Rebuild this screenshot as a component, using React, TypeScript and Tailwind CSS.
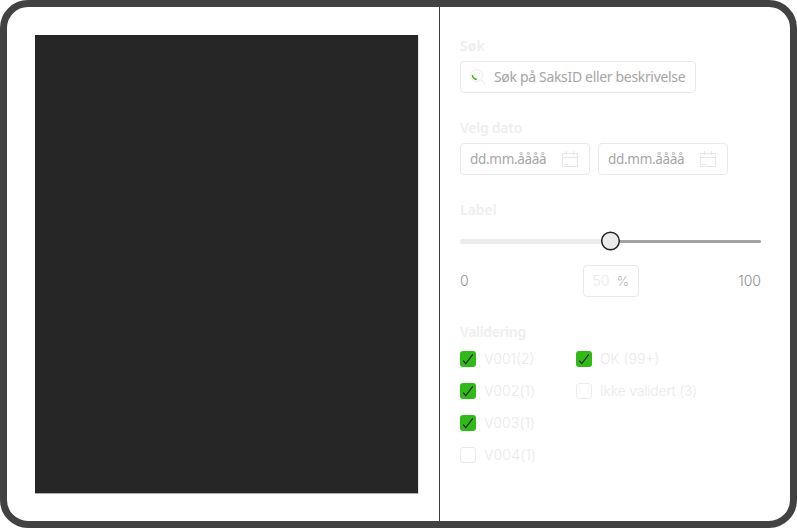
import React from "react";

function Check({ label, checked = false, className = "" }: { label: string; checked?: boolean; className?: string }) {
  return (
    <label className="flex h-8 items-center gap-2">
      <span
        className={`flex size-4 shrink-0 items-center justify-center rounded-[3px] ${
          checked ? "bg-[#31b917]" : "border border-[#ebebeb] bg-white"
        }`}
      >
        {checked && (
          <svg width="16" height="16" viewBox="0 0 16 16" fill="none" stroke="#222" strokeWidth="1.1">
            <path d="M3.2 9.7 5.8 12.6 12.8 3.4" />
          </svg>
        )}
      </span>
      <span className={`whitespace-nowrap font-['Inter',sans-serif] font-light text-[#e9e9e9] ${className}`}>{label}</span>
    </label>
  );
}

function DateField() {
  return (
    <div className="flex h-8 w-[130px] items-center justify-between rounded-[4px] border border-[#e9e9e9] pr-[11px] pl-[9px]">
      <span className="text-[13.5px] tracking-[-0.3px] text-[#a6a6a6]">dd.mm.åååå</span>
      <svg width="16" height="16" viewBox="0 0 16 16" fill="none" stroke="#e6e6e6">
        <rect x=".5" y="2.5" width="15" height="13" rx=".5" />
        <path d="M0 6.5h16M4.5 0v4M11.5 0v4M2 13.5h4" />
      </svg>
    </div>
  );
}

function Heading({ children, className = "" }: { children: string; className?: string }) {
  return <h2 className={`h-5 text-[14px] leading-5 font-semibold text-[#eee] ${className}`}>{children}</h2>;
}

export default function App() {
  return (
    <main className="flex h-[528px] w-[797px] overflow-hidden rounded-[28px] border-[7px] border-[#424242] bg-white font-['Noto_Sans',sans-serif] text-[14px] leading-5">
      <section className="w-[433px] shrink-0 border-r border-[#3d3d3d] pt-7 pl-7">
        <div className="h-[459px] w-[384px] border-r border-b border-r-[#e5e5e5] border-b-[#b0b0b0] bg-[#262626]" />
      </section>
      <section className="w-[350px] pt-[29px] pl-5">
        <Heading className="tracking-[0.1px]">Søk</Heading>
        <div className="mt-[5px] flex h-8 w-[236px] items-center rounded-[4px] border border-[#e9e9e9] pl-[9px]">
          <svg width="16" height="16" viewBox="0 0 16 16" fill="none">
            <circle cx="6.5" cy="6.5" r="6" stroke="#e9e9e9" />
            <path d="m11 11 4.5 4.5" stroke="#e5e5e5" />
            <path d="M2.2 6c.5 2.4 1.9 4 4.6 4.5" stroke="#31b917" strokeWidth="1.3" />
          </svg>
          <span className="ml-2 whitespace-nowrap tracking-[-0.33px] text-[#a6a6a6]">Søk på SaksID eller beskrivelse</span>
        </div>
        <Heading className="mt-[25px] tracking-[-0.25px]">Velg dato</Heading>
        <div className="mt-[5px] flex gap-2">
          <DateField />
          <DateField />
        </div>
        <Heading className="mt-[25px]">Label</Heading>
        <div className="mt-[11px] flex h-5 w-[301px] items-center">
          <div className="h-[5px] w-[141px] rounded-l-full bg-[#ececec]" />
          <svg className="-mr-px shrink-0" width="20" height="20" viewBox="0 0 20 20">
            <circle cx="9.5" cy="10" r="8.8" fill="#ebebeb" stroke="#222" strokeWidth="1.5" />
          </svg>
          <div className="h-[3px] flex-1 rounded-r-full bg-[#a2a2a2]" />
        </div>
        <div className="mt-[14px] flex h-8 w-[301px] items-center font-['Inter',sans-serif] font-light text-[#8e8e8e]">
          <span className="w-[122.5px]">0</span>
          <div className="flex h-8 w-14 items-center justify-between rounded-[4px] border border-[#e9e9e9] px-[9px]">
            <span className="text-[#e9e9e9]">50</span>
            <span className="text-[13px] tracking-[-0.5px] text-[#b5b5b5]">%</span>
          </div>
          <span className="ml-auto">100</span>
        </div>
        <Heading className="mt-[25px] tracking-[-0.35px]">Validering</Heading>
        <div className="mt-[1px] grid grid-cols-[116px_200px]">
          <Check label="V001(2)" checked />
          <Check label="OK (99+)" checked />
          <Check label="V002(1)" checked className="tracking-[0.1px]" />
          <Check label="Ikke validert (3)" className="tracking-[-0.2px]" />
          <Check label="V003(1)" checked className="tracking-[0.1px]" />
          <span />
          <Check label="V004(1)" className="tracking-[0.2px]" />
        </div>
      </section>
    </main>
  );
}
